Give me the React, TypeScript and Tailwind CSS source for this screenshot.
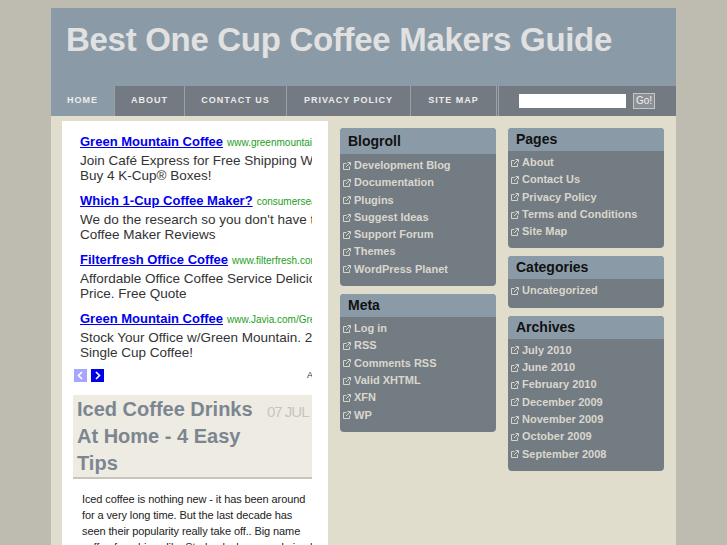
import React from 'react';

const navItems = [
  { label: 'HOME', w: 'w-[64px]', active: true },
  { label: 'ABOUT', w: 'w-[70px]' },
  { label: 'CONTACT US', w: 'w-[102px]' },
  { label: 'PRIVACY POLICY', w: 'w-[124px]' },
  { label: 'SITE MAP', w: 'w-[86px]' },
];

const ads = [
  { title: 'Green Mountain Coffee', url: 'www.greenmountaincoffee.com', desc: ['Join Café Express for Free Shipping When', 'Buy 4 K-Cup® Boxes!'] },
  { title: 'Which 1-Cup Coffee Maker?', url: 'consumersearch.com', desc: ['We do the research so you don\'t have to', 'Coffee Maker Reviews'] },
  { title: 'Filterfresh Office Coffee', url: 'www.filterfresh.com', desc: ['Affordable Office Coffee Service Delicious', 'Price. Free Quote'] },
  { title: 'Green Mountain Coffee', url: 'www.Javia.com/GreenMountain', desc: ['Stock Your Office w/Green Mountain. 20', 'Single Cup Coffee!'] },
];

const LinkIcon = () => (
  <svg width="8" height="8" viewBox="0 0 8 8" className="shrink-0 text-[#d7d5ca]">
    <path d="M3.5 1.5H0.5V7.5H6.5V4.5" fill="none" stroke="currentColor" strokeWidth="1" />
    <path d="M3 5L7 1M4.5 0.5H7.5V3.5" fill="none" stroke="currentColor" strokeWidth="1" />
  </svg>
);

const Widget = ({ title, items, tall }: { title: string; items: string[]; tall?: boolean }) => (
  <div className="mb-[8px] overflow-hidden rounded-[4px] bg-[#737b83]">
    <div className={`flex items-center bg-[#8a9ba7] pl-[8px] text-[14px] font-bold text-[#111] ${tall ? 'h-[26px]' : 'h-[23px]'}`}>{title}</div>
    <ul className="pb-[8px] pt-[3px]">
      {items.map((it) => (
        <li key={it} className="flex items-center gap-[3px] pl-[3px] text-[11px] font-bold leading-[17.3px] text-[#d9d7cc]">
          <LinkIcon />
          <span>{it}</span>
        </li>
      ))}
    </ul>
  </div>
);

const App: React.FC = () => {
  return (
    <div className="min-h-screen bg-[#bebbb1] pt-[8px] font-['Liberation_Sans',Arial,sans-serif]">
      <div className="mx-auto w-[625px]">
        <div className="h-[78px] bg-[#8a9ba7] pl-[15px] pt-[12px]">
          <h1 className="text-[33px] font-bold leading-[40px] tracking-[-0.3px] text-[#e1e1e1]">Best One Cup Coffee Makers Guide</h1>
        </div>

        <div className="flex h-[30px] bg-[#737a82]">
          {navItems.map((n) => (
            <div
              key={n.label}
              className={`${n.w} flex items-center justify-center border-r border-[#9ba2a5] text-[9px] font-bold tracking-[1px] text-[#ececec] ${n.active ? 'bg-[#8a9ba7]' : ''}`}
            >
              {n.label}
            </div>
          ))}
          <div className="ml-[1px] w-[1px] bg-[#9ba2a5]" />
          <div className="ml-[20px] flex items-center">
            <input className="h-[14px] w-[107px] bg-white outline-none" />
            <button className="ml-[7px] h-[16px] w-[22px] border border-[#c4c6c8] bg-[#8a9096] text-[10px] leading-[12px] text-[#eee]">Go!</button>
          </div>
        </div>

        <div className="flex min-h-[440px] bg-[#e1ddcc] pl-[11px] pr-[12px] pt-[5px]">
          <div className="w-[266px] bg-white pt-[12px]">
            <div className="ml-[11px] w-[239px] overflow-hidden">
              <div className="flex flex-col gap-[9px] pl-[7px]">
                {ads.map((a, i) => (
                  <div key={i} className="whitespace-nowrap">
                    <div className="flex h-[18px] items-baseline gap-[4px] leading-[18px]">
                      <span className="text-[13px] font-bold text-[#0000ee] underline">{a.title}</span>
                      <span className="text-[10px] text-[#1ca01c]">{a.url}</span>
                    </div>
                    <div className="mt-[2px] text-[13.5px] leading-[15px] text-[#333]">
                      <div>{a.desc[0]}</div>
                      <div>{a.desc[1]}</div>
                    </div>
                  </div>
                ))}
              </div>
              <div className="mt-[9px] flex h-[13px] items-center pl-[1px]">
                <div className="flex h-[13px] w-[13px] shrink-0 items-center justify-center bg-[#a6a6ff]">
                  <svg width="7" height="9" viewBox="0 0 7 9"><path d="M5 1L1.5 4.5L5 8" fill="none" stroke="#fff" strokeWidth="1.6" /></svg>
                </div>
                <div className="ml-[4px] flex h-[13px] w-[13px] shrink-0 items-center justify-center bg-[#0000e6]">
                  <svg width="7" height="9" viewBox="0 0 7 9"><path d="M2 1L5.5 4.5L2 8" fill="none" stroke="#fff" strokeWidth="1.6" /></svg>
                </div>
                <span className="ml-[203px] shrink-0 whitespace-nowrap text-[9px] text-[#333]">Ads by Google</span>
              </div>

              <div className="mt-[13px] flex border-b-[2px] border-[#c9c5b8] bg-[#eeebe2] pl-[4px] pt-[1px]">
                <h2 className="w-[180px] text-[20px] font-bold leading-[27px] text-[#7c8690]">Iced Coffee Drinks At Home - 4 Easy Tips</h2>
                <span className="ml-[10px] mt-[5px] whitespace-nowrap text-[15px] tracking-[-1px] text-[#c6c5be]">07 JUL</span>
              </div>

              <p className="w-[240px] pl-[9px] pt-[12px] text-[11px] leading-[16px] tracking-[-0.1px] text-[#222]">
                Iced coffee is nothing new - it has been around for a very long time. But the last decade has seen their popularity really take off.. Big name coffee franchises like Starbucks have made iced coffee a favourite summer treat.
              </p>
            </div>
          </div>

          <div className="ml-[12px] mt-[7px] w-[156px]">
            <Widget title="Blogroll" tall items={['Development Blog', 'Documentation', 'Plugins', 'Suggest Ideas', 'Support Forum', 'Themes', 'WordPress Planet']} />
            <Widget title="Meta" items={['Log in', 'RSS', 'Comments RSS', 'Valid XHTML', 'XFN', 'WP']} />
          </div>

          <div className="ml-[12px] mt-[7px] w-[156px]">
            <Widget title="Pages" items={['About', 'Contact Us', 'Privacy Policy', 'Terms and Conditions', 'Site Map']} />
            <Widget title="Categories" items={['Uncategorized']} />
            <Widget title="Archives" items={['July 2010', 'June 2010', 'February 2010', 'December 2009', 'November 2009', 'October 2009', 'September 2008']} />
          </div>
        </div>
      </div>
    </div>
  );
};

export default App;
